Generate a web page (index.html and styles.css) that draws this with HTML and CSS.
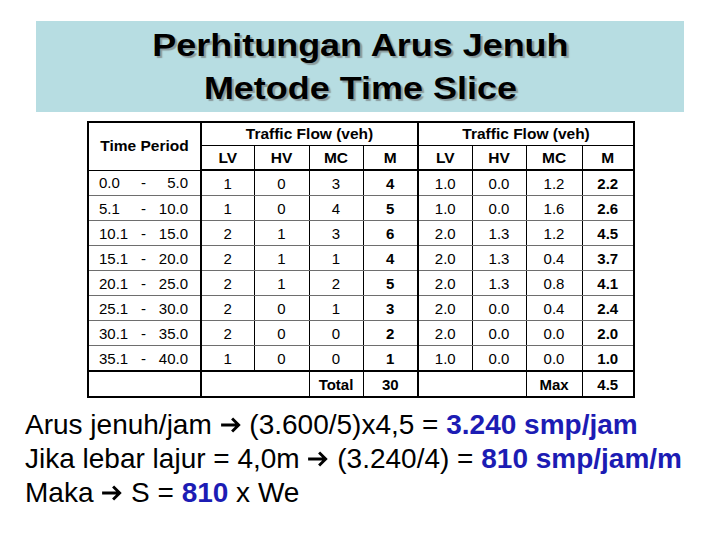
FILE: index.html
```html
<!DOCTYPE html>
<html>
<head>
    <title>Perhitungan Arus Jenuh</title>
    <link rel="stylesheet" href="styles.css">
</head>
<body>
    <!-- Title -->
    <div class="title-box">
        <h1>Perhitungan Arus Jenuh<br>Metode Time Slice</h1>
    </div>

    <!-- Traffic table -->
    <table class="flow-table">
        <colgroup>
            <col class="c-time">
            <col class="c-lv"><col class="c-hv"><col class="c-mc"><col class="c-m">
            <col class="c-lv2"><col class="c-hv2"><col class="c-mc2"><col class="c-m2">
        </colgroup>
        <thead>
            <tr class="top">
                <th rowspan="2" class="time-head">Time Period</th>
                <th colspan="4" class="group">Traffic Flow (veh)</th>
                <th colspan="4" class="group">Traffic Flow (veh)</th>
            </tr>
            <tr class="sub">
                <th>LV</th><th>HV</th><th>MC</th><th class="split">M</th>
                <th>LV</th><th>HV</th><th>MC</th><th>M</th>
            </tr>
        </thead>
        <tbody>
            <tr><td class="time"><div class="range"><span>0.0</span><span>-</span><span>5.0</span></div></td><td>1</td><td>0</td><td>3</td><td class="b split">4</td><td>1.0</td><td>0.0</td><td>1.2</td><td class="b">2.2</td></tr>
            <tr><td class="time"><div class="range"><span>5.1</span><span>-</span><span>10.0</span></div></td><td>1</td><td>0</td><td>4</td><td class="b split">5</td><td>1.0</td><td>0.0</td><td>1.6</td><td class="b">2.6</td></tr>
            <tr><td class="time"><div class="range"><span>10.1</span><span>-</span><span>15.0</span></div></td><td>2</td><td>1</td><td>3</td><td class="b split">6</td><td>2.0</td><td>1.3</td><td>1.2</td><td class="b">4.5</td></tr>
            <tr><td class="time"><div class="range"><span>15.1</span><span>-</span><span>20.0</span></div></td><td>2</td><td>1</td><td>1</td><td class="b split">4</td><td>2.0</td><td>1.3</td><td>0.4</td><td class="b">3.7</td></tr>
            <tr><td class="time"><div class="range"><span>20.1</span><span>-</span><span>25.0</span></div></td><td>2</td><td>1</td><td>2</td><td class="b split">5</td><td>2.0</td><td>1.3</td><td>0.8</td><td class="b">4.1</td></tr>
            <tr><td class="time"><div class="range"><span>25.1</span><span>-</span><span>30.0</span></div></td><td>2</td><td>0</td><td>1</td><td class="b split">3</td><td>2.0</td><td>0.0</td><td>0.4</td><td class="b">2.4</td></tr>
            <tr><td class="time"><div class="range"><span>30.1</span><span>-</span><span>35.0</span></div></td><td>2</td><td>0</td><td>0</td><td class="b split">2</td><td>2.0</td><td>0.0</td><td>0.0</td><td class="b">2.0</td></tr>
            <tr><td class="time"><div class="range"><span>35.1</span><span>-</span><span>40.0</span></div></td><td>1</td><td>0</td><td>0</td><td class="b split">1</td><td>1.0</td><td>0.0</td><td>0.0</td><td class="b">1.0</td></tr>
            <tr class="total">
                <td class="time"></td>
                <td colspan="2"></td>
                <td class="b">Total</td>
                <td class="b split">30</td>
                <td colspan="2"></td>
                <td class="b">Max</td>
                <td class="b">4.5</td>
            </tr>
        </tbody>
    </table>

    <!-- Calculation -->
    <div class="calc">
        <p>Arus jenuh/jam <svg class="arrow" viewBox="0 0 20 16"><path d="M1 8H17M11 2L17 8L11 14"/></svg> (3.600/5)x4,5 = <b>3.240 smp/jam</b></p>
        <p>Jika lebar lajur = 4,0m <svg class="arrow" viewBox="0 0 20 16"><path d="M1 8H17M11 2L17 8L11 14"/></svg> (3.240/4) = <b>810 smp/jam/m</b></p>
        <p>Maka <svg class="arrow" viewBox="0 0 20 16"><path d="M1 8H17M11 2L17 8L11 14"/></svg> S = <b>810</b> x We</p>
    </div>
</body>
</html>
```

FILE: styles.css
```css
/* General */
body {
    margin: 0;
    padding: 0;
    background: #ffffff;
    font-family: "Liberation Sans", Arial, sans-serif;
    color: #000;
}

/* Title */
.title-box {
    margin: 21px 0 0 36px;
    width: 648px;
    height: 91px;
    background: #b7dde2;
    display: flex;
    align-items: center;
    justify-content: center;
}

.title-box h1 {
    margin: 0;
    font-size: 31px;
    line-height: 43px;
    font-weight: bold;
    text-align: center;
    text-shadow: 2px 2px 1px #8a9a9c;
    transform: scaleX(1.16);
}

/* Table */
.flow-table {
    margin: 9px 0 0 87px;
    border-collapse: collapse;
    table-layout: fixed;
    width: 546px;
    border: 2px solid #000;
    font-size: 15px;
}

.c-time { width: 113px; }
.c-lv { width: 53px; }
.c-hv { width: 55px; }
.c-mc { width: 54px; }
.c-m { width: 55px; }
.c-lv2 { width: 54px; }
.c-hv2 { width: 54px; }
.c-mc2 { width: 56px; }
.c-m2 { width: 52px; }

.flow-table th,
.flow-table td {
    border: 1px solid #000;
    height: 24px;
    padding: 0;
    text-align: center;
    vertical-align: middle;
}

.flow-table th {
    font-weight: bold;
    font-size: 15.5px;
}

.flow-table tr.top th {
    height: 22px;
}

.flow-table .group {
    border-left: 2px solid #000;
}

.flow-table .time-head {
    border-right: 2px solid #000;
}

.flow-table .sub th {
    height: 23px;
    border-bottom: 2px solid #000;
}

.flow-table tbody td {
    border-top: 1px solid #6e6e6e;
    border-bottom: 1px solid #6e6e6e;
}

.flow-table .split {
    border-right: 2px solid #000;
}

.flow-table td.time {
    border-right: 2px solid #000;
    padding: 0 12px 0 10px;
}

.range {
    display: grid;
    grid-template-columns: 1fr auto 1fr;
    align-items: center;
}

.range span:first-child { text-align: left; }
.range span:last-child { text-align: right; }

.flow-table .b {
    font-weight: bold;
}

.flow-table tr.total td {
    border-top: 2px solid #000;
}

/* Calculation lines */
.calc {
    margin: 10px 0 0 25px;
    font-size: 28px;
    line-height: 34px;
}

.calc p {
    margin: 0;
}

.calc b {
    color: #1c1cb4;
}

.arrow {
    width: 22px;
    height: 18px;
    vertical-align: 0px;
    fill: none;
    stroke: #000;
    stroke-width: 2.6;
}
```
